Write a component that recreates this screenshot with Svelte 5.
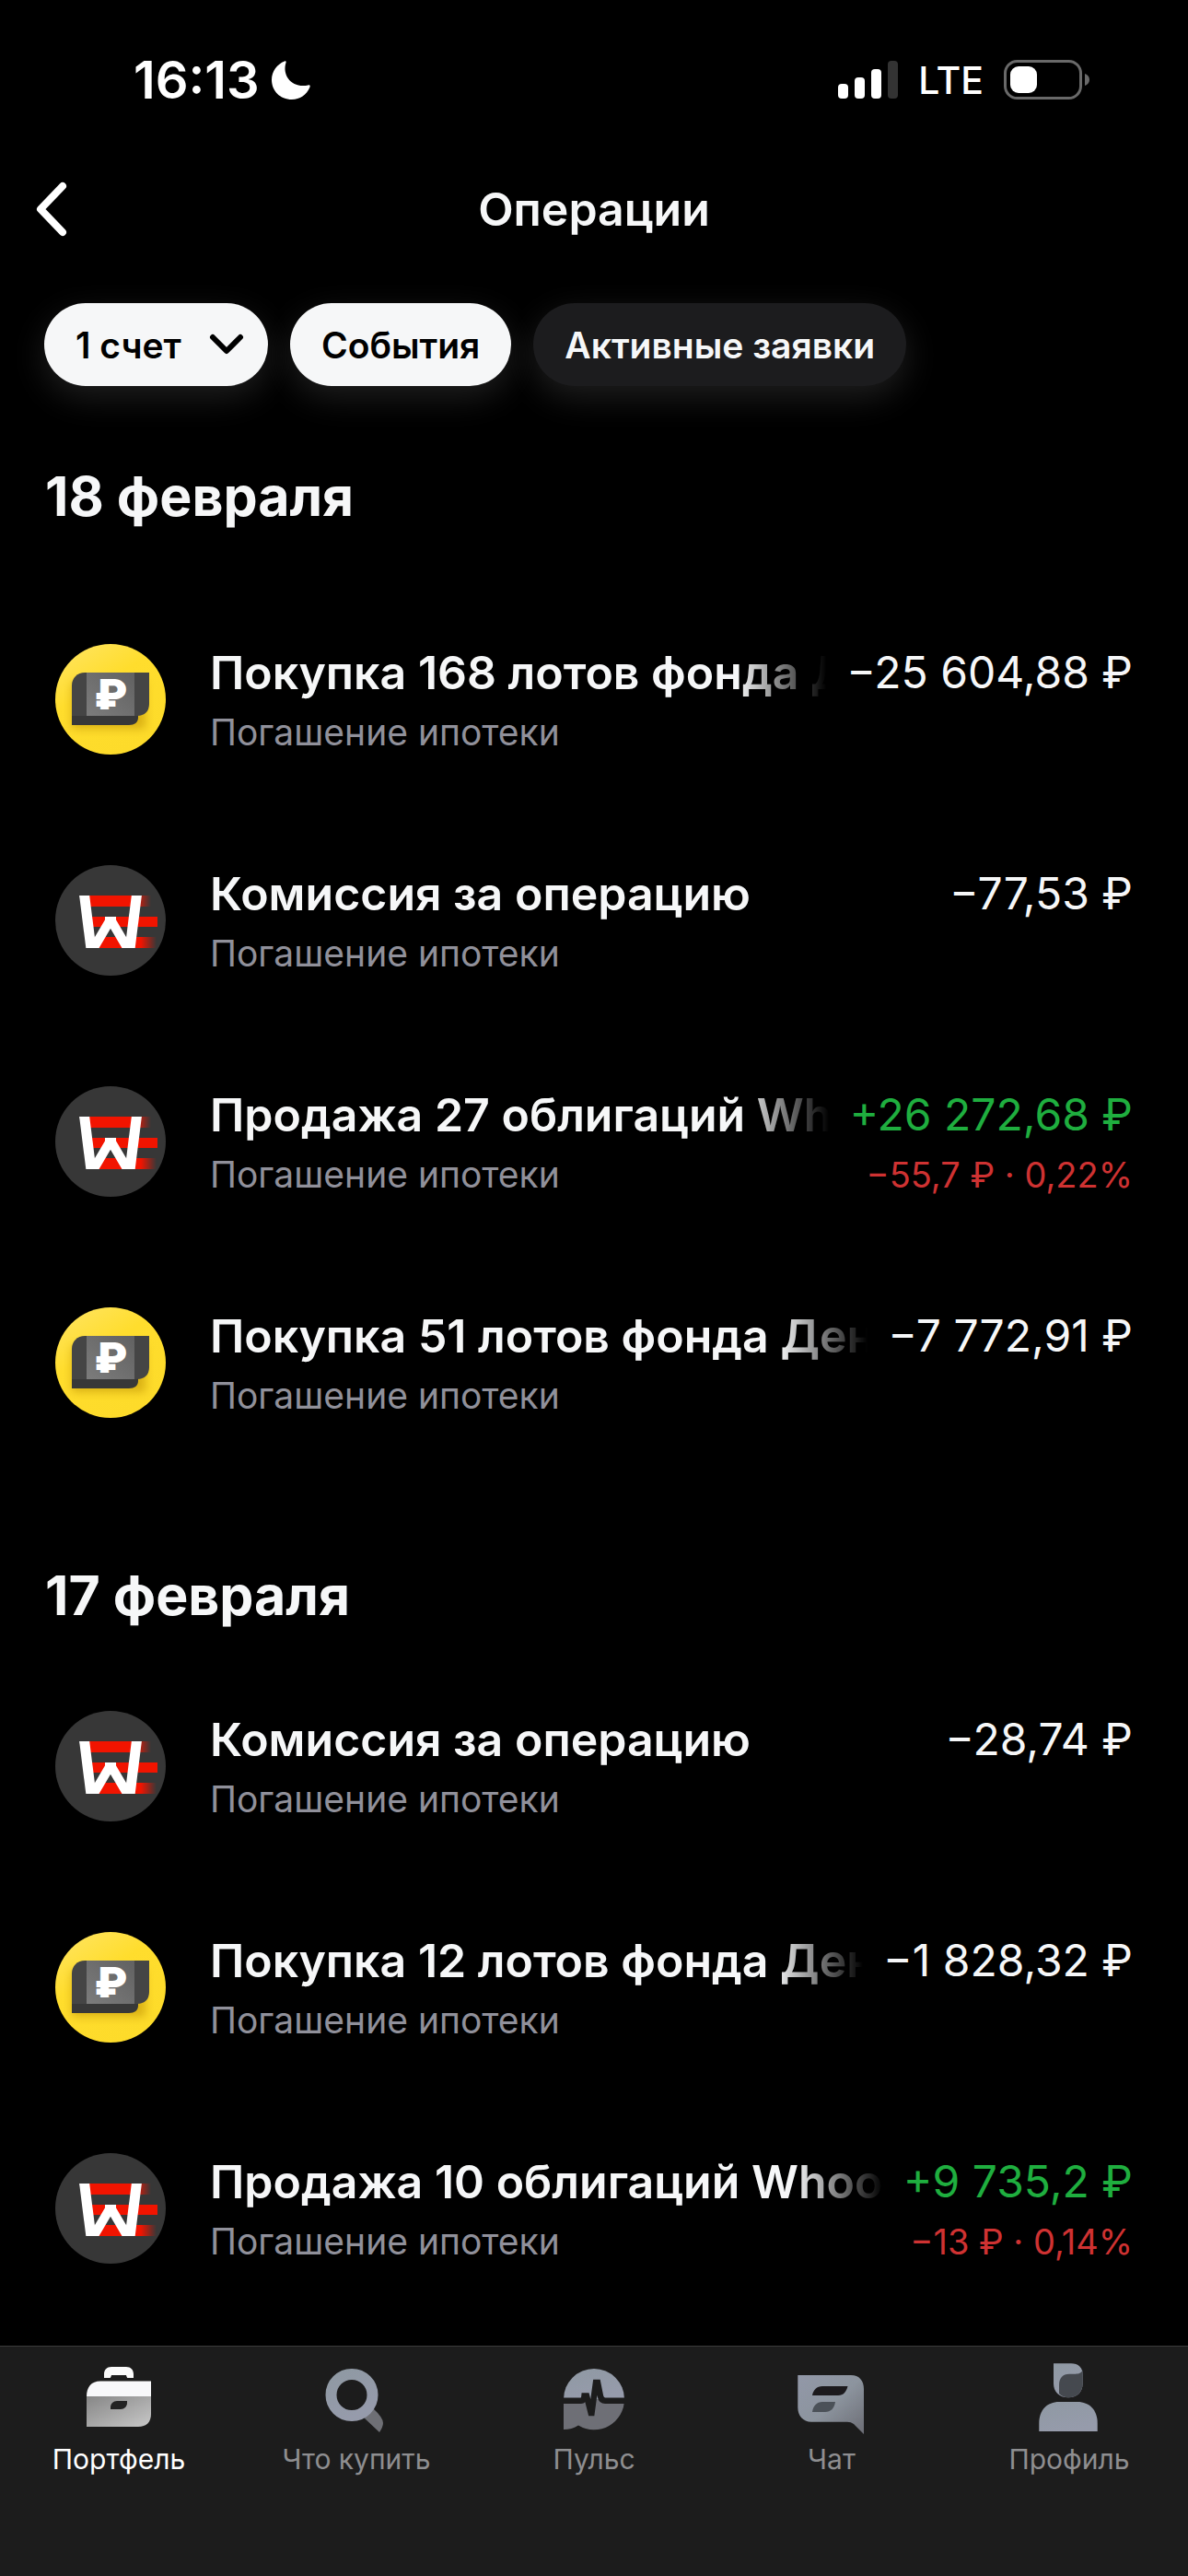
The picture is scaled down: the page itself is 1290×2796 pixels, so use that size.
<script>
	const days = [
		{
			date: '18 февраля',
			items: [
				{ logo: 'money', title: 'Покупка 168 лотов фонда Д', amount: '−25 604,88 ₽' },
				{ logo: 'whoosh', title: 'Комиссия за операцию', amount: '−77,53 ₽' },
				{ logo: 'whoosh', title: 'Продажа 27 облигаций Wh', amount: '+26 272,68 ₽', result: '−55,7 ₽ · 0,22%' },
				{ logo: 'money', title: 'Покупка 51 лотов фонда Ден', amount: '−7 772,91 ₽' },
			],
		},
		{
			date: '17 февраля',
			items: [
				{ logo: 'whoosh', title: 'Комиссия за операцию', amount: '−28,74 ₽' },
				{ logo: 'money', title: 'Покупка 12 лотов фонда Ден', amount: '−1 828,32 ₽' },
				{ logo: 'whoosh', title: 'Продажа 10 облигаций Whoo', amount: '+9 735,2 ₽', result: '−13 ₽ · 0,14%' },
			],
		},
	]

	const account = 'Погашение ипотеки'

	const tabs = [
		{ id: 'portfolio', label: 'Портфель' },
		{ id: 'search', label: 'Что купить' },
		{ id: 'pulse', label: 'Пульс' },
		{ id: 'chat', label: 'Чат' },
		{ id: 'profile', label: 'Профиль' },
	]

	let activeTab = $state('portfolio')
</script>

<!-- Gradients shared by all the icons below -->
<svg class="defs" width="0" height="0" aria-hidden="true">
	<defs>
		<linearGradient id="gold" x1="0" y1="0" x2="0.6" y2="1">
			<stop offset="0" stop-color="#ffe566" />
			<stop offset="0.45" stop-color="#ffdd2d" />
			<stop offset="1" stop-color="#fddb2a" />
		</linearGradient>
		<linearGradient id="note" x1="0" y1="1" x2="1" y2="0">
			<stop offset="0" stop-color="#7c7c7c" />
			<stop offset="1" stop-color="#616161" />
		</linearGradient>
		<linearGradient id="stripe" x1="0" y1="0" x2="1" y2="0">
			<stop offset="0.75" stop-color="#f11400" />
			<stop offset="1" stop-color="#f11400" stop-opacity="0" />
		</linearGradient>
		<linearGradient id="case" x1="0" y1="0" x2="1" y2="1">
			<stop offset="0" stop-color="#868686" />
			<stop offset="1" stop-color="#c8c8c8" />
		</linearGradient>
		<linearGradient id="steel" x1="0" y1="0" x2="0.5" y2="1">
			<stop offset="0" stop-color="#8f99a3" />
			<stop offset="1" stop-color="#969bab" />
		</linearGradient>
		<linearGradient id="bubble" x1="0" y1="0" x2="1" y2="1">
			<stop offset="0" stop-color="#9298a8" />
			<stop offset="0.5" stop-color="#8c949e" />
			<stop offset="1" stop-color="#6c6d75" />
		</linearGradient>
		<filter id="soft" x="-20%" y="-20%" width="140%" height="160%">
			<feGaussianBlur stdDeviation="5" />
		</filter>
		<clipPath id="disc"><circle cx="60" cy="60" r="60" /></clipPath>
		<clipPath id="mark"><rect x="20" y="33" width="80" height="57" /></clipPath>
	</defs>
</svg>

<div class="app">
	<div class="status">
		<div class="clock">
			<span class="time">16:13</span>
			<svg width="44" height="44" viewBox="0 0 44 44" aria-hidden="true">
				<path d="M15 1.500C16 1 17 1.700 16.500 3C12 17 23 31 40.500 27.500C42.500 27 43 28 42.500 29.500C39 38 31.500 43 23 43C10 43 1 33.500 1 21.500C1 12.500 7 4.500 15 1.500Z" fill="#fff" />
			</svg>
		</div>
		<div class="signals">
			<svg width="65" height="42" viewBox="0 0 65 42" aria-hidden="true">
				<rect x="0" y="25" width="11" height="16" rx="4" fill="#fff" />
				<rect x="18" y="18" width="11" height="23" rx="4" fill="#fff" />
				<rect x="36" y="9" width="11" height="32" rx="4" fill="#fff" />
				<rect x="54" y="0" width="11" height="41" rx="4" fill="#333" />
			</svg>
			<span class="network">LTE</span>
			<svg width="94" height="44" viewBox="0 0 94 44" aria-hidden="true">
				<rect x="1.500" y="1.500" width="82" height="40" rx="13" fill="none" stroke="#696969" stroke-width="3" />
				<rect x="7" y="7" width="29" height="29" rx="9" fill="#fff" />
				<path d="M88 15C91 16 93 18.500 93 21.500C93 24.500 91 27 88 28Z" fill="#696969" />
			</svg>
		</div>
	</div>

	<header class="header">
		<button class="back" aria-label="Назад">
			<svg width="36" height="60" viewBox="0 0 36 60" aria-hidden="true">
				<path d="M30 5L6 30L30 55" fill="none" stroke="#fff" stroke-width="8" stroke-linecap="round" stroke-linejoin="round" />
			</svg>
		</button>
		<h1>Операции</h1>
	</header>

	<div class="filters">
		<button class="chip light picker">
			1 счет
			<svg width="38" height="24" viewBox="0 0 38 24" aria-hidden="true">
				<path d="M4 4L19 19L34 4" fill="none" stroke="#000" stroke-width="6" stroke-linecap="round" stroke-linejoin="round" />
			</svg>
		</button>
		<button class="chip light">События</button>
		<button class="chip">Активные заявки</button>
	</div>

	<main>
		{#each days as day}
			<section>
				<h2>{day.date}</h2>
				<ul>
					{#each day.items as item}
						<li class="row">
							<svg class="logo" width="120" height="120" viewBox="0 0 120 120" aria-hidden="true">
								{#if item.logo === 'money'}
									<circle cx="60" cy="60" r="60" fill="url(#gold)" />
									<g clip-path="url(#disc)">
										<rect x="18" y="42" width="80" height="50" fill="#b98a00" opacity="0.5" filter="url(#soft)" />
									</g>
									<path d="M18 76H90V80C90 85 86 88 80 88H18Z" fill="#383838" />
									<path d="M32 31H102V65C102 73 97 78 89 78H18V45C18 37 24 31 32 31Z" fill="#454545" />
									<rect x="34" y="31" width="52" height="47" fill="url(#note)" />
									<text x="60" y="71" class="ruble">₽</text>
								{:else}
									<circle cx="60" cy="60" r="60" fill="#373737" />
									<rect x="34" y="33" width="70" height="12" fill="url(#stripe)" />
									<rect x="38" y="56" width="73" height="11" fill="#f11400" />
									<rect x="42" y="78" width="68" height="12" fill="url(#stripe)" />
									<g clip-path="url(#mark)" fill="none" stroke="#fff" stroke-width="11">
										<path d="M31 28L39.500 95" />
										<path d="M89 28L80.500 95" />
										<path d="M37 98L60 59L83 98" stroke-width="10" stroke-linejoin="bevel" />
										<path d="M54 59H66" stroke-width="6" />
									</g>
								{/if}
							</svg>
							<div class="info">
								<span class="title">{item.title}</span>
								<span class="account">{account}</span>
							</div>
							<div class="sums">
								<span class="amount" class:income={item.result}>{item.amount}</span>
								{#if item.result}
									<span class="result">{item.result}</span>
								{/if}
							</div>
						</li>
					{/each}
				</ul>
			</section>
		{/each}
	</main>

	<nav class="tabs">
		{#each tabs as tab}
			<a href="#{tab.id}" class:active={activeTab === tab.id} onclick={() => (activeTab = tab.id)}>
				<svg width="90" height="90" viewBox="0 0 90 90" aria-hidden="true">
					{#if tab.id === 'portfolio'}
						<path d="M29 25V17C29 12 32 9 37 9H53C58 9 61 12 61 17V25C57 24 54 22 53 18H37C36 22 33 24 29 25Z" fill="#fafafa" />
						<path d="M10 21H80V26H10Z" fill="#1c1c1c" />
						<path d="M10 41C10 31 15 24.500 25 24.500H80V41Z" fill="#f8f8fa" />
						<path d="M10 41H80V60C80 69 75 74 66 74H10Z" fill="url(#case)" />
						<path d="M36 55V53C36 49 39 46 43 46H54V48C54 52 51 55 47 55Z" fill="#222" />
					{:else if tab.id === 'search'}
						<path d="M53 64L70 80Q74 74 74 70Q74 64 63 54Z" fill="#6e6f75" />
						<circle cx="40" cy="39.500" r="22.500" fill="none" stroke="url(#steel)" stroke-width="12" />
					{:else if tab.id === 'pulse'}
						<path d="M12 44A33 33 0 0 1 78 44Z" fill="url(#steel)" />
						<path d="M12 44H78A33 33 0 0 1 28 72.500Q21 77 12 77Z" fill="#6e6f76" />
						<path d="M10 45.700H31Q34 45.700 34.500 40.500H37L41.700 59H42.500L47 26H49L52 41Q53 45.700 57 45.700H80" fill="none" stroke="#1c1c1c" stroke-width="6.500" />
					{:else if tab.id === 'chat'}
						<path d="M8.300 18H66C75 18 80 24 80 33V82L69 71Q66 68.700 62 68.700H23C14 68.700 8.300 62 8.300 53Z" fill="url(#bubble)" />
						<path d="M24 40C25 34 29 30 35 30H62.500C61 36 58 40 52 40Z" fill="#1c1a1d" />
						<path d="M24 58C25 51 29 47 35 47H49C48 54 44 58 38 58Z" fill="#4b5158" />
					{:else}
						<path d="M28 5.300H47C55 5.300 59.600 10 59.600 17V27C59.600 37 53 42.300 44 42.300C34 42.300 28 36 28 27Z" fill="url(#steel)" />
						<path d="M34 38V29C34 21 38 16.700 45 16.700H52C56 16.700 59 15 59.600 12V27C59.600 37 53 42.300 44 42.300C40 42.300 37 41 34 38Z" fill="#45494f" />
						<path d="M12.300 79V70C12.300 56 21 47 34 47H54C67 47 75.700 56 75.700 70V79Z" fill="url(#steel)" />
					{/if}
				</svg>
				<span>{tab.label}</span>
			</a>
		{/each}
	</nav>
</div>

<style>
	:global(body) {
		background: #000;
		color: #f6f7f8;
		font-family: Inter, 'Noto Sans', sans-serif;
	}

	.defs {
		position: absolute;
	}

	.app {
		display: flex;
		flex-direction: column;
		min-height: 100vh;
	}

	.status {
		display: flex;
		justify-content: space-between;
		align-items: center;
		height: 174px;
		padding: 0 106px 0 145px;
		box-sizing: border-box;
		color: #fff;
	}

	.clock,
	.signals {
		display: flex;
		align-items: center;
	}

	.clock {
		gap: 12px;
	}

	.time {
		font-size: 56px;
		font-weight: 600;
	}

	.signals {
		gap: 22px;
	}

	.network {
		font-size: 41px;
		font-weight: 500;
	}

	.header {
		display: grid;
		grid-template-columns: 72px 1fr 72px;
		align-items: center;
		height: 106px;
		padding: 0 38px;
	}

	button {
		border: 0;
		background: none;
		color: inherit;
		font-family: inherit;
		cursor: pointer;
	}

	.back {
		display: flex;
		padding: 0;
	}

	h1 {
		margin: 0;
		font-size: 50px;
		font-weight: 600;
		text-align: center;
	}

	.filters {
		display: flex;
		gap: 24px;
		margin-top: 49px;
		padding: 0 48px;
	}

	.chip {
		display: flex;
		align-items: center;
		gap: 30px;
		height: 90px;
		padding: 0 34px;
		border-radius: 45px;
		background: #1c1c1e;
		box-shadow: 0 12px 36px rgba(255, 255, 255, 0.12);
		font-size: 39px;
		font-weight: 600;
		white-space: nowrap;
	}

	.chip.light {
		background: #f6f7f8;
		color: #000;
	}

	.chip.picker {
		padding-right: 26px;
	}

	main {
		padding: 55px 60px 28px;
	}

	section + section {
		margin-top: 68px;
	}

	section:first-child ul {
		margin-top: 35px;
	}

	h2 {
		margin: 0 -11px;
		font-size: 59px;
		font-weight: 700;
		line-height: 130px;
	}

	ul {
		margin: 0;
		padding: 0;
		list-style: none;
	}

	.row {
		display: flex;
		padding: 60px 0 50px;
	}

	.logo {
		flex: none;
	}

	.ruble {
		fill: #fff;
		font-size: 46px;
		font-weight: 900;
		text-anchor: middle;
	}

	.info,
	.sums {
		display: flex;
		flex-direction: column;
		white-space: nowrap;
	}

	.info {
		flex: 1;
		min-width: 0;
		margin: 0 22px 0 48px;
	}

	.sums {
		align-items: flex-end;
	}

	.title,
	.amount {
		line-height: 62px;
	}

	.title {
		overflow: hidden;
		font-size: 50px;
		font-weight: 600;
		mask-image: linear-gradient(to right, #000 calc(100% - 96px), transparent);
	}

	.amount {
		font-size: 48px;
	}

	.account,
	.result {
		font-size: 38px;
		line-height: 68px;
	}

	.account {
		font-size: 39px;
		color: #90909a;
	}

	.income {
		color: #1fae3f;
	}

	.result {
		color: #cf3232;
	}

	.tabs {
		position: sticky;
		bottom: 0;
		display: grid;
		grid-template-columns: repeat(5, 1fr);
		height: 250px;
		margin-top: auto;
		box-sizing: border-box;
		border-top: 1px solid #3a3a3a;
		background: #1c1c1c;
	}

	.tabs a {
		display: flex;
		flex-direction: column;
		align-items: center;
		padding-top: 13px;
		color: #8e8e90;
		font-size: 30px;
		line-height: 38px;
		text-decoration: none;
	}

	.tabs .active {
		color: #fff;
	}
</style>
